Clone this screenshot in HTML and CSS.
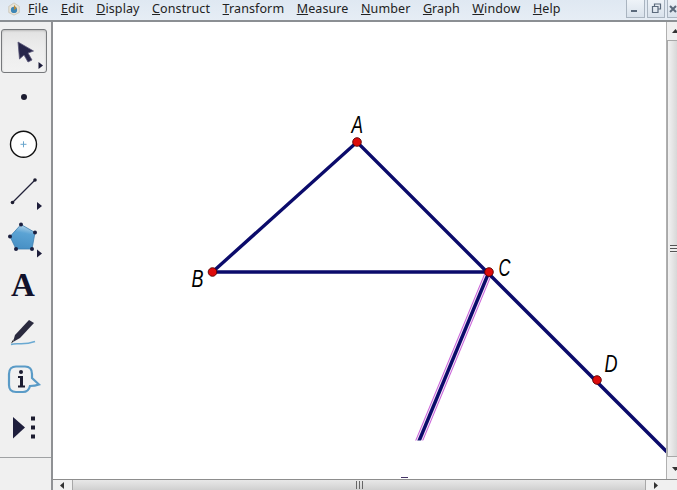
FILE: index.html
```html
<!DOCTYPE html>
<html lang="en">
<head>
<meta charset="utf-8">
<title>Sketchpad</title>
<link rel="stylesheet" href="styles.css">
</head>
<body>
<div class="app">
  <header class="menubar">
    <svg class="appicon" width="14" height="14" viewBox="0 0 16 16">
      <path d="M8 1 14 5V12L8 15 2 12V5Z" fill="#e8e4d8" stroke="#b8b09c" stroke-width=".6"/>
      <circle cx="8" cy="9" r="3.6" fill="#3f86b5"/>
      <path d="M8 3 11 7 8 9Z" fill="#b58a3a"/>
    </svg>
    <nav class="menus">
      <span class="menu"><u>F</u>ile</span>
      <span class="menu"><u>E</u>dit</span>
      <span class="menu"><u>D</u>isplay</span>
      <span class="menu"><u>C</u>onstruct</span>
      <span class="menu"><u>T</u>ransform</span>
      <span class="menu"><u>M</u>easure</span>
      <span class="menu"><u>N</u>umber</span>
      <span class="menu"><u>G</u>raph</span>
      <span class="menu"><u>W</u>indow</span>
      <span class="menu"><u>H</u>elp</span>
    </nav>
    <div class="winbtns">
      <span class="winbtn minbtn"><svg width="9" height="9" viewBox="0 0 9 9"><rect x="0" y="6" width="6" height="2" fill="#5b6a7c"/></svg></span>
      <span class="winbtn maxbtn"><svg width="11" height="11" viewBox="0 0 11 11"><path d="M3.500 3V1H9.500V6H7.500M1.500 3.500H7V9.500H1.500Z" fill="none" stroke="#5b6a7c" stroke-width="1.200"/></svg></span>
      <span class="winbtn closebtn"><svg width="8" height="10" viewBox="0 0 8 10"><path d="M1 2 7 8M7 2 1 8" stroke="#5b6a7c" stroke-width="2"/></svg></span>
    </div>
  </header>
  <div class="workspace">
    <aside class="toolbox">
      <div class="tools">
        <div class="tool active">
          <svg width="46" height="44" viewBox="0 0 46 44">
            <path d="M17 13 18.500 30 23 26 27 33 31 31 27 24 32.500 22Z" fill="#26254a" stroke="#5a5878" stroke-width=".8"/>
            <path d="M37.500 33V40L42 36.500Z" fill="#1c1c3a"/>
          </svg>
        </div>
        <div class="tool">
          <svg width="46" height="46" viewBox="0 0 46 46"><circle cx="24" cy="23" r="3" fill="#1c1c30"/></svg>
        </div>
        <div class="tool">
          <svg width="46" height="46" viewBox="0 0 46 46">
            <circle cx="23.500" cy="23.300" r="13" fill="#fff" stroke="#111" stroke-width="1.400"/>
            <path d="M23.500 20.300V26.300M20.500 23.300H26.500" stroke="#6aa6cc" stroke-width="1"/>
          </svg>
        </div>
        <div class="tool">
          <svg width="46" height="46" viewBox="0 0 46 46">
            <path d="M12 35 35 12" stroke="#22223a" stroke-width="1.300"/>
            <circle cx="12.500" cy="34.500" r="1.800" fill="#1c1c30"/>
            <circle cx="35" cy="12" r="1.800" fill="#1c1c30"/>
            <path d="M37 34V42L42 38Z" fill="#1c1c3a"/>
          </svg>
        </div>
        <div class="tool">
          <svg width="46" height="46" viewBox="0 0 46 46">
            <defs><linearGradient id="pent" x1=".6" y1="0" x2=".4" y2="1"><stop offset="0" stop-color="#bcd9ec"/><stop offset=".35" stop-color="#5ba3d4"/><stop offset="1" stop-color="#468fc4"/></linearGradient></defs>
            <path d="M21 8.500 35 16.500 32 33 16 33 10 20.500Z" fill="url(#pent)" stroke="#3d7fb0" stroke-width=".8"/>
            <g fill="#1c2040"><circle cx="21" cy="8.500" r="2"/><circle cx="35" cy="16.500" r="2"/><circle cx="32" cy="33" r="2"/><circle cx="16" cy="33" r="2"/><circle cx="10" cy="20.500" r="2"/></g>
            <path d="M37 33.500V41.500L42 37.500Z" fill="#1c1c3a"/>
          </svg>
        </div>
        <div class="tool textA">A</div>
        <div class="tool">
          <svg width="46" height="46" viewBox="0 0 46 46">
            <path d="M29 10 34 13 20 28 13 32 15 25Z" fill="#2a2a3e"/>
            <path d="M13 32 11 33.500 13.500 29Z" fill="#111"/>
            <path d="M11 34.500C17 32 22 36 35 31.500" fill="none" stroke="#6aa9d2" stroke-width="1.500"/>
          </svg>
        </div>
        <div class="tool">
          <svg width="46" height="46" viewBox="0 0 46 46">
            <path d="M16 9.500H25C30 9.500 32 13 32 17V21L39 27.500C35 29 32 29 30 29C29 33 27 35 23 35H16C11 35 9 32 9 28V17C9 12 12 9.500 16 9.500Z" fill="#f1f1f1" stroke="#5a9bc7" stroke-width="2.200"/>
            <circle cx="21" cy="15" r="2" fill="#1c1c30"/>
            <path d="M18 19H23V28.500H25V30.500H18V28.500H20V21H18Z" fill="#1c1c30"/>
          </svg>
        </div>
        <div class="tool">
          <svg width="46" height="46" viewBox="0 0 46 46">
            <path d="M13 12V33.500L25 22.500Z" fill="#1e1e3c"/>
            <path d="M31 11.500h4v4h-4zM31 20.500h4v4h-4zM31 29.500h4v4h-4z" fill="#1c1c30"/>
          </svg>
        </div>
      </div>
      <div class="toolfoot"></div>
    </aside>
    <main class="docarea">
      <div class="docrow">
        <div class="canvas">
          <svg class="drawing" width="613" height="457" viewBox="53 22 613 457">
            <path d="M417.400 445 489 272" stroke="#c860d8" stroke-width="7.400" fill="none"/>
            <path d="M417.400 445 489 272" stroke="#f6e4f8" stroke-width="5.600" fill="none"/>
            <path d="M417.400 445 489 272" stroke="#0b0b6b" stroke-width="3.400" fill="none"/>
            <rect x="405" y="440.500" width="30" height="8" fill="#fff"/>
            <path d="M212.500 272H489M212.500 272 357 142 667 452" stroke="#0b0b6b" stroke-width="3.400" fill="none"/>
            <g fill="#dd0b0b" stroke="#5a0000" stroke-width=".9">
              <circle cx="357" cy="142" r="4.300"/>
              <circle cx="212.500" cy="272" r="4.300"/>
              <circle cx="489" cy="272" r="4.300"/>
              <circle cx="597" cy="380" r="4.300"/>
            </g>
            <path d="M401 477.500H408" stroke="#443366" stroke-width="1"/>
            <g class="labels">
              <text x="351.500" y="133" textLength="11.500" lengthAdjust="spacingAndGlyphs">A</text>
              <text x="191.500" y="287" textLength="12" lengthAdjust="spacingAndGlyphs">B</text>
              <text x="498.500" y="276" textLength="12" lengthAdjust="spacingAndGlyphs">C</text>
              <text x="604.500" y="372" textLength="13" lengthAdjust="spacingAndGlyphs">D</text>
            </g>
          </svg>
        </div>
        <div class="vscroll">
          <span class="arrow arrow-up"><svg width="9" height="9" viewBox="0 0 9 9"><path d="M4.500 2 8 6H1Z" fill="#333"/></svg></span>
          <div class="vtrack">
            <div class="vthumb"><span class="grip-h"></span></div>
          </div>
          <span class="arrow arrow-down"><svg width="9" height="9" viewBox="0 0 9 9"><path d="M4.500 7 8 3H1Z" fill="#333"/></svg></span>
        </div>
      </div>
      <div class="hscroll">
        <span class="arrow-h"><svg width="9" height="9" viewBox="0 0 9 9"><path d="M2 4.500 6 1V8Z" fill="#333"/></svg></span>
        <div class="hthumb"><span class="grip-v"></span></div>
        <span class="arrow-h"><svg width="9" height="9" viewBox="0 0 9 9"><path d="M7 4.500 3 1V8Z" fill="#333"/></svg></span>
        <span class="corner"></span>
      </div>
    </main>
  </div>
</div>
</body>
</html>
```
FILE: styles.css
```css
* { box-sizing: border-box; }
html, body { margin: 0; height: 100%; overflow: hidden; }
.app { width: 677px; height: 490px; display: flex; flex-direction: column; background: #f0f0f0; font-family: "Noto Sans", "Liberation Sans", sans-serif; overflow: hidden; }
.menubar { height: 20px; flex: none; display: flex; align-items: center; background: linear-gradient(#dfe8f2, #e6edf5); padding-left: 7px; }
.appicon { flex: none; margin-top: -3px; }
.menus { display: flex; margin-left: 7px; gap: 12.500px; font-size: 12.500px; color: #222; letter-spacing: .1px; margin-top: -3px; }
.winbtns { margin-left: auto; display: flex; gap: 1px; align-self: flex-start; }
.winbtn { height: 18px; display: flex; align-items: center; justify-content: center; background: linear-gradient(#eef3f8, #d9e2ec); border: 1px solid #a9b4c0; border-top: 0; }
.minbtn { width: 19px; margin-right: 1px; }
.maxbtn { width: 18px; margin-right: 1px; }
.closebtn { width: 10px; border-right: 0; justify-content: flex-end; }
.workspace { flex: 1; display: flex; min-height: 0; border-top: 2px solid #8b8f93; }
.toolbox { width: 53px; flex: none; display: flex; flex-direction: column; background: #f0f0f0; border-right: 2px solid #8f9194; }
.tools { flex: 1; padding-top: 7px; display: flex; flex-direction: column; }
.tool { width: 46px; height: 47.300px; display: flex; align-items: center; justify-content: center; flex: none; }
.tool.active { height: 44px; margin-left: 1px; background: linear-gradient(#e2e2e2, #ececec 40%, #f2f2f2); border: 1px solid #77797c; border-radius: 3px; box-shadow: inset 0 1px 2px #bbb; }
.tool.active svg { margin: -1px; }
.textA { font: bold 33px/1 "Liberation Serif", serif; color: #11112a; padding-bottom: 1px; }
.toolfoot { height: 33px; flex: none; border-top: 1px solid #a0a2a4; }
.docarea { flex: 1; min-width: 0; display: flex; flex-direction: column; }
.docrow { flex: 1; display: flex; min-height: 0; }
.canvas { flex: 1; min-width: 0; background: #fff; overflow: hidden; }
.drawing { display: block; }
.labels text { font: italic 23px "Liberation Sans", sans-serif; fill: #000; }
.vscroll { width: 11px; flex: none; display: flex; flex-direction: column; background: #f0f0f0; border-left: 1px solid #b0b0b0; overflow: hidden; }
.arrow { flex: none; display: flex; align-items: center; justify-content: flex-end; }
.arrow svg { margin-right: -3px; }
.arrow-up { height: 18px; }
.arrow-down { height: 22px; }
.vtrack { flex: 1; min-height: 0; display: flex; }
.vthumb { flex: 1; display: flex; align-items: center; justify-content: flex-end; background: linear-gradient(90deg, #f2f2f2, #d8d8d8); border: 1px solid #a8a8a8; border-right: 0; }
.grip-h { width: 7px; height: 8px; background: repeating-linear-gradient(#555 0 1px, #eee 1px 3px); }
.hscroll { height: 11px; flex: none; display: flex; align-items: center; background: #f0f0f0; border-top: 1px solid #8d8d8d; }
.arrow-h { width: 19px; height: 100%; flex: none; display: flex; align-items: center; justify-content: center; }
.hthumb { flex: 1; height: 100%; display: flex; align-items: center; justify-content: center; background: linear-gradient(#e8e8e8, #d0d0d0); border-left: 1px solid #a8a8a8; border-right: 1px solid #a8a8a8; }
.grip-v { width: 7px; height: 8px; background: repeating-linear-gradient(90deg, #666 0 1px, transparent 1px 3px); }
.corner { width: 12px; height: 100%; flex: none; }
```
